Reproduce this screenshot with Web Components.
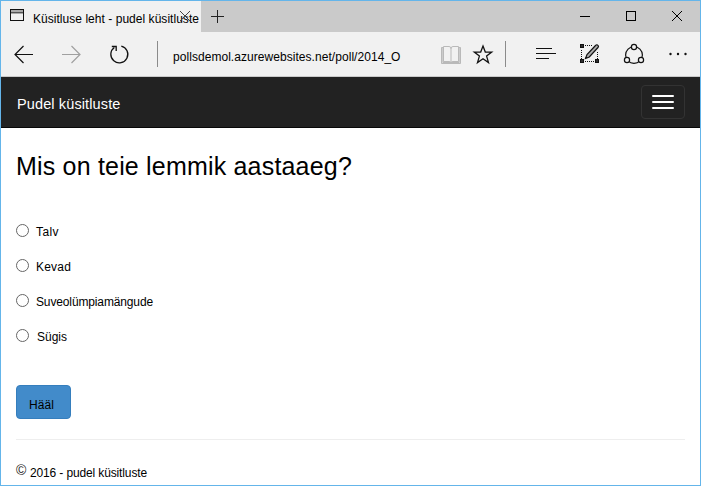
<!DOCTYPE html>
<html lang="et">
<head>
<meta charset="utf-8">
<title>Küsitluse leht - pudel küsitluste</title>
<style>
html,body{margin:0;height:100%}
body{font-family:"Liberation Sans",Arial,sans-serif;font-size:12px;color:#000;overflow:hidden}
</style>
</head>
<body>
<browser-window>
  <tab-strip slot="tabs"><fit-text width="166">Küsitluse leht - pudel küsitluste</fit-text></tab-strip>
  <address-bar slot="toolbar"><fit-text width="227.5">pollsdemol.azurewebsites.net/poll/2014_O</fit-text></address-bar>
  <site-nav><fit-text width="103.5">Pudel küsitluste</fit-text></site-nav>
  <poll-form>
    <fit-text slot="title" width="336">Mis on teie lemmik aastaaeg?</fit-text>
    <poll-option><fit-text width="23">Talv</fit-text></poll-option>
    <poll-option><fit-text width="35">Kevad</fit-text></poll-option>
    <poll-option><fit-text width="117">Suveolümpiamängude</fit-text></poll-option>
    <poll-option style="--gap:8px"><fit-text width="30">Sügis</fit-text></poll-option>
    <fit-text slot="action" width="25">Hääl</fit-text>
  </poll-form>
  <site-footer><fit-text width="117">2016 - pudel küsitluste</fit-text></site-footer>
</browser-window>
<script>
function define(name, html, setup) {
  customElements.define(name, class extends HTMLElement {
    constructor() {
      super();
      this.attachShadow({mode: 'open'}).innerHTML = html;
    }
    connectedCallback() { if (setup) setup(this); }
  });
}

define('browser-window', `
<style>
:host{display:flex;flex-direction:column;box-sizing:border-box;width:701px;height:486px;border:1px solid #64b5ea;background:#fff;overflow:hidden}
</style>
<slot name="tabs"></slot><slot name="toolbar"></slot><slot></slot>`);

define('tab-strip', `
<style>
:host{display:flex;height:31px;flex:none;background:#cacaca}
.tab{position:relative;width:200px;background:#f1f1f1;display:flex;box-sizing:border-box;padding-left:9px}
.tab>svg{margin-top:8px;flex:none}
.label{padding:11px 0 0 9px;line-height:15px}
.close{position:absolute;left:178px;top:1px}
.plus{margin:8px 0 0 9px}
.win{margin-left:auto;display:flex}
svg{display:block}
</style>
<div class="tab">
<svg width="14" height="13" viewBox="0 0 14 13"><path d="M0 3H14" stroke="#aaa" stroke-width="4"/><rect x=".5" y=".5" width="13" height="11" fill="none" stroke="#111"/><path d="M1 3.5H13" stroke="#555"/></svg>
<div class="label"><slot></slot></div>
<svg class="close" width="12" height="12" viewBox="0 0 12 12"><path d="M1 1L11 11M11 1L1 11" stroke="#444" fill="none"/></svg>
</div>
<svg class="plus" width="15" height="15" viewBox="0 0 15 15"><path d="M7.5 1V14M1 7.5H14" stroke="#222"/></svg>
<div class="win">
<svg width="121" height="31" viewBox="579 1 121 31"><path d="M580 16.5H590" stroke="#000"/><rect x="626.5" y="11.5" width="9" height="9" fill="none" stroke="#000"/><path d="M672 11L682 21M682 11L672 21" stroke="#000"/></svg>
</div>`);

define('address-bar', `
<style>
:host{display:flex;height:45px;flex:none;background:#f1f1f1;border-bottom:1px solid #cacaca;box-sizing:border-box}
svg{display:block;flex:none}
.url{width:268px;box-sizing:border-box;padding:18px 0 0 13px;line-height:15px}
</style>
<svg width="159" height="44" viewBox="1 32 159 44" fill="none" stroke="#111" stroke-width="1.2">
<path d="M33 54.5H15M23.500 46L15 54.500L23.500 63"/>
<path d="M62 54.500H80M71.500 46L80 54.500L71.500 63" stroke="#a0a0a0"/>
<path d="M121.300 46.100A8.500 8.500 0 1 1 114.300 47.500" stroke-width="1.300"/><path d="M111.800 46.500H116.200V51" stroke-width="1.300"/>
<path d="M157.500 41V67" stroke="#8b8b8b" stroke-width="1"/>
</svg>
<div class="url"><slot></slot></div>
<svg width="272" height="44" viewBox="428 32 272 44" fill="none" stroke="#111">
<g stroke="#b9b9b9"><path d="M441.500 47.500H443V62.500H459V47.500H460.500V63.500H441.500Z" fill="#ddd"/><path d="M443.500 46.500H449Q451 46.500 451 48.500Q451 46.500 453 46.500H458.500V61.500H453Q451 61.500 451 63Q451 61.500 449 61.500H443.500ZM451 48V63"/></g>
<path d="M483 46L485.300 52.100H491.700L486.600 56.100L488.500 62.600L483 58.800L477.500 62.600L479.400 56.100L474.300 52.100H480.700Z" stroke-width="1.300"/>
<path d="M505.500 41V67" stroke="#8b8b8b"/>
<path d="M536 48.500H552M536 53.500H556M536 58.500H549" stroke-width="1"/>
<g><path d="M585 45.500H593M581.500 50V59M585 61.500H594M597.500 52V59" stroke-dasharray="1 1"/>
<path d="M580.700 44.700h2.600v2.600h-2.600zM580.700 59.700h2.600v2.600h-2.600zM595.700 59.700h2.600v2.600h-2.600z" stroke-width="1.400" fill="#777"/>
<path d="M585.500 58.500L587 54.500L595.500 45.500Q597 44 598 45.500Q599 46.500 598 47.500L589.300 57Z" fill="#aaa" stroke-width="1.200"/></g>
<g stroke-width="1.200"><circle cx="634" cy="55" r="8.400"/><g fill="#f1f1f1"><circle cx="634" cy="47" r="2.600"/><circle cx="627" cy="60" r="2.600"/><circle cx="641" cy="60" r="2.600"/></g></g>
<g fill="#111" stroke="none"><circle cx="670.500" cy="54" r="1.200"/><circle cx="678" cy="54" r="1.200"/><circle cx="685.500" cy="54" r="1.200"/></g>
</svg>`);

define('site-nav', `
<style>
:host{display:flex;justify-content:space-between;height:51px;flex:none;box-sizing:border-box;background:#222;border-bottom:1px solid #080808;color:#fff;font-size:14.500px;padding:8px 15px 0 16px}
.brand{padding-top:10px;line-height:18px}
.toggle{width:44px;height:34px;box-sizing:border-box;border:1px solid #333;border-radius:4px;display:flex;flex-direction:column;align-items:center;gap:4px;padding-top:9px}
i{width:22px;height:2px;border-radius:1px;background:#fff}
</style>
<div class="brand"><slot></slot></div>
<div class="toggle"><i></i><i></i><i></i></div>`);

define('poll-form', `
<style>
:host{display:block;padding:22px 15px 0;flex:none}
.title{font-size:25px;line-height:32px;height:64px}
.options{display:flex;flex-direction:column;gap:15px}
.btn{margin-top:46px;width:55px;height:34px;box-sizing:border-box;border:1px solid #357ebd;border-radius:4px;background:#428bca;padding:11px 0 0 12px;line-height:16px}
hr{margin:20px 0 0;border:0;border-top:1px solid #eee}
</style>
<div class="title"><slot name="title"></slot></div>
<div class="options"><slot></slot></div>
<div class="btn"><slot name="action"></slot></div>
<hr>`);

define('poll-option', `
<style>
:host{display:flex;height:20px;gap:var(--gap,7px)}
i{width:13px;height:13px;box-sizing:border-box;border:1px solid #666;border-radius:50%;margin-top:10px;flex:none}
span{padding-top:11px;line-height:15px}
</style>
<i></i><span><slot></slot></span>`);

define('site-footer', `
<style>
:host{display:flex;padding:21px 15px 0;gap:3px}
.c{font-size:14px;line-height:18px;width:11px;color:#222}
.t{padding-top:5px;line-height:15px}
</style>
<span class="c">©</span><span class="t"><slot></slot></span>`);

/* Spreads its text evenly over the advance width given in the attribute. */
define('fit-text', `
<style>:host{display:inline-block;white-space:nowrap}</style><slot></slot>`, el => {
  const natural = el.getBoundingClientRect().width;
  el.style.letterSpacing = (el.getAttribute('width') - natural) / el.textContent.length + 'px';
});
</script>
</body>
</html>
